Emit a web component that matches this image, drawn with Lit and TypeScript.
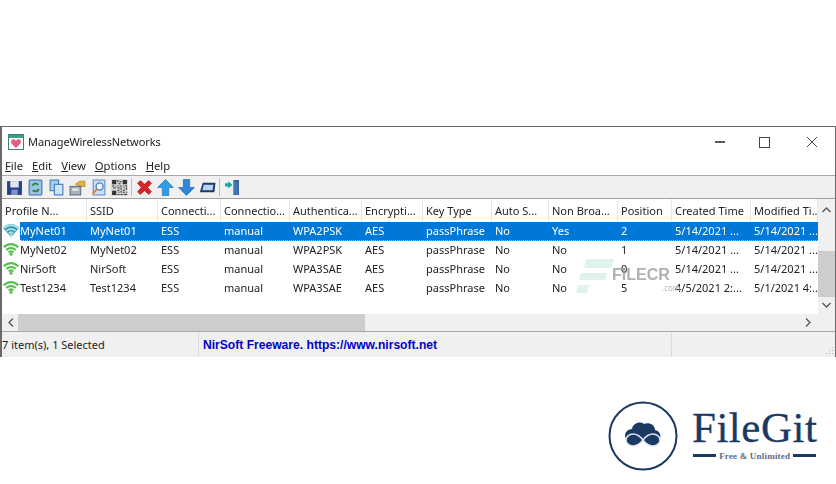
import { LitElement, css, html, svg } from "lit";
import { customElement } from "lit/decorators.js";

const columns = [
  { title: "Profile N...", w: 85 },
  { title: "SSID", w: 71 },
  { title: "Connecti...", w: 63 },
  { title: "Connectio...", w: 69 },
  { title: "Authentica...", w: 72 },
  { title: "Encrypti...", w: 61 },
  { title: "Key Type", w: 69 },
  { title: "Auto S...", w: 57 },
  { title: "Non Broa...", w: 69 },
  { title: "Position", w: 54 },
  { title: "Created Time", w: 79 },
  { title: "Modified Ti...", w: 67 },
];

const rows = [
  ["MyNet01", "MyNet01", "ESS", "manual", "WPA2PSK", "AES", "passPhrase", "No", "Yes", "2", "5/14/2021 ...", "5/14/2021 ..."],
  ["MyNet02", "MyNet02", "ESS", "manual", "WPA2PSK", "AES", "passPhrase", "No", "No", "1", "5/14/2021 ...", "5/14/2021 ..."],
  ["NirSoft", "NirSoft", "ESS", "manual", "WPA3SAE", "AES", "passPhrase", "No", "No", "0", "5/14/2021 ...", "5/14/2021 ..."],
  ["Test1234", "Test1234", "ESS", "manual", "WPA3SAE", "AES", "passPhrase", "No", "No", "5", "4/5/2021 2:...", "5/1/2021 4:..."],
];

const wifi = (selected: boolean) => {
  const color = selected ? "#a6dfe8" : "#55c04a";
  return html`<svg class="wifi" width="16" height="14" viewBox="0 0 16 14">
    ${selected ? svg`<path d="M0 5C4-.5 12-.5 16 5L8 14z" fill="#2b8fa8"/>` : ""}
    <path d="M.8 5.300C5 1 11 1 15.200 5.300" fill="none" stroke=${color} stroke-width="2.200"/>
    <path d="M3.300 8C6 5.300 10 5.300 12.700 8" fill="none" stroke=${color} stroke-width="2.200"/>
    <path d="M5.700 10.400C7 9.200 9 9.200 10.300 10.400" fill="none" stroke=${color} stroke-width="2"/>
    <circle cx="8" cy="12.300" r="1.500" fill=${color}/>
  </svg>`;
};

const icons = [
  svg`<rect x="1" y="2" width="14" height="13" fill="#27408b"/><rect x="4" y="2" width="8" height="6" fill="#dfe6f2"/><rect x="5" y="10" width="6" height="5" fill="#7f93c4"/>`,
  svg`<rect x="2" y="1" width="12" height="14" rx="1" fill="#9cc3e6" stroke="#3f6fa8"/><path d="M5 6.500a3.200 3.200 0 0 1 5.500-1M11 9.500a3.200 3.200 0 0 1-5.500 1" fill="none" stroke="#1e8a35" stroke-width="1.800"/>`,
  svg`<rect x="2" y="1" width="8" height="10" fill="#a9cdf0" stroke="#3d78b8"/><rect x="6" y="5" width="8" height="10" fill="#cfe3f7" stroke="#3d78b8"/>`,
  svg`<path d="M6 5l4-3h5v5h-4z" fill="#e2b43c" stroke="#9c7a1e" stroke-width=".6"/><rect x="1" y="7" width="10" height="8" fill="#a8b0ba" stroke="#68717c"/><rect x="3" y="9" width="6" height="2" fill="#eee"/>`,
  svg`<rect x="3" y="1" width="11" height="14" fill="#cfe1f5" stroke="#5b8cc4"/><circle cx="9" cy="7" r="3.300" fill="#f4f8fc" stroke="#4e7fb8" stroke-width="1.300"/><path d="M6.500 9.500L2.500 14" stroke="#d8883a" stroke-width="2"/>`,
  svg`<rect x="0" y="0" width="16" height="16" fill="#d8d8d8"/><path d="M1 1h4v4H1zM11 1h4v4h-4zM1 11h4v4H1zM6 1h1v2H6zM8 2h2v1H8zM7 4h2v1H7zM6 6h1v1H6zM8 6h2v1H8zM1 6h2v1H1zM4 7h1v1H4zM2 8h2v1H2zM6 8h2v1H6zM9 8h1v2H9zM11 6h1v1h-1zM13 6h2v1h-2zM12 8h1v1h-1zM14 8h1v2h-1zM6 10h2v1H6zM11 10h2v1h-2zM7 12h1v1H7zM9 11h1v2H9zM11 12h2v1h-2zM14 12h1v1h-1zM6 14h2v1H6zM9 14h2v1H9zM12 14h3v1h-3z" fill="#333"/>`,
  svg`<path d="M1.500 4L4 1.500l4 3.500 4-3.500L14.500 4 11 8l3.500 4-2.500 2.500-4-3.500-4 3.500L1.500 12 5 8z" fill="#dc2229" stroke="#a5151b" stroke-width=".6"/>`,
  svg`<path d="M8 .5L15.500 8H11v7.500H5V8H.5z" fill="#2f9ce6" stroke="#1a6cb0" stroke-width=".6"/>`,
  svg`<path d="M8 15.500L15.500 8H11V.5H5V8H.5z" fill="#2f86d8" stroke="#1a62a8" stroke-width=".6"/>`,
  svg`<path d="M3.500 3.500H15.500L14.500 12.500H.8z" fill="#1d3a66" stroke-linejoin="round"/><path d="M4.500 5.500h9l-.7 5H3.200z" fill="#b9d4ee"/>`,
  svg`<rect x="9" y="1" width="5" height="14" fill="#2a4f86"/><path d="M9 1l4 2v12l-4-1z" fill="#3d78b8"/><path d="M1 4h3V2l4 3.500L4 9V7H1z" fill="#19a6a0"/>`,
];

@customElement("app-root")
export class AppRoot extends LitElement {
  static styles = css`
    :host {
      display: block;
      position: relative;
      height: 484px;
      background: #fff;
      font-family: "Noto Sans", "Open Sans", sans-serif;
      font-size: 11px;
      color: #222;
      overflow: hidden;
    }
    .window {
      position: absolute;
      left: 0;
      top: 126px;
      width: 836px;
      height: 231px;
      box-sizing: border-box;
      border: 1px solid #6a6a6a;
      border-left-width: 2px;
      display: flex;
      flex-direction: column;
      filter: blur(0.4px);
    }
    .title {
      height: 29px;
      display: flex;
      align-items: center;
      padding-left: 6px;
      gap: 4px;
      flex: none;
    }
    .title .name { flex: 1; letter-spacing: -0.1px; }
    .caption { display: flex; }
    .caption svg { display: block; width: 46px; height: 14px; }
    .menu {
      height: 19px;
      display: flex;
      align-items: center;
      gap: 9px;
      padding-left: 3px;
      flex: none;
      font-size: 11.25px;
      border-bottom: 1px solid #a8a8a8;
    }
    .toolbar {
      height: 22px;
      background: #f0f0f0;
      display: flex;
      align-items: center;
      padding-left: 4px;
      gap: 4px;
      flex: none;
      border-bottom: 1px solid #a0a0a0;
    }
    .toolbar svg { width: 17px; height: 17px; flex: none; }
    .sep { width: 1px; height: 18px; background: #bdbdbd; margin-left: -1px; }
    .body { height: 115px; display: flex; flex: none; }
    .list { flex: 1; min-width: 0; }
    .head { display: flex; height: 23px; }
    .head span {
      box-sizing: border-box;
      padding-left: 3px;
      line-height: 23px;
      border-right: 1px solid #e6e6e6;
      white-space: nowrap;
      overflow: hidden;
    }
    .row { display: flex; height: 19px; align-items: flex-start; position: relative; }
    .row span {
      box-sizing: border-box;
      padding-left: 3px;
      white-space: nowrap;
      overflow: hidden;
      line-height: 17px;
    }
    .row span.first { padding-left: 1px; display: flex; align-items: center; }
    .row.selected { color: #fff; }
    .row.selected .band {
      position: absolute;
      left: 18px;
      right: 0;
      top: 0;
      height: 19px;
      background: #0078d7;
      border-bottom: 1px dotted #e8c070;
      box-sizing: border-box;
    }
    .row.selected span { position: relative; }
    .wifi { flex: none; margin-right: 1px; margin-top: -2px; }
    .vbar {
      width: 17px;
      background: #f0f0f0;
      position: relative;
      flex: none;
    }
    .vbar .thumb { position: absolute; left: 0; right: 0; top: 52px; height: 46px; background: #cdcdcd; }
    .arrow { position: absolute; display: block; }
    .hbar { height: 17px; background: #f0f0f0; position: relative; flex: none; }
    .hbar .thumb { position: absolute; left: 16px; width: 347px; top: 0; bottom: 0; background: #cdcdcd; }
    .status {
      flex: 1;
      display: flex;
      align-items: center;
      background: #f0f0f0;
      border-top: 1px solid #a8a8a8;
      position: relative;
    }
    .status .count {
      box-sizing: border-box;
      width: 197px;
      border-right: 1px solid #dcdcdc;
      line-height: 24px;
      padding-top: 1px;
    }
    .status .link {
      box-sizing: border-box;
      width: 473px;
      padding: 1px 0 0 4px;
      border-right: 1px solid #dcdcdc;
      line-height: 23px;
      color: #0000d0;
      font-family: "Liberation Sans", Arial, sans-serif;
      font-weight: 700;
      font-size: 12.1px;
    }
    .grip { position: absolute; right: 1px; bottom: 1px; }
    .filecr { position: absolute; left: 576px; top: 256px; width: 110px; height: 40px; }
    .filecr .word {
      position: absolute;
      left: 36px;
      top: 10px;
      font: 700 16px "Liberation Sans", sans-serif;
      color: #a8a8a8;
      opacity: 0.9;
    }
    .filecr .com { position: absolute; left: 86px; top: 26px; font-size: 8px; color: #b8b8b8; }
    .logo {
      position: absolute;
      left: 608px;
      top: 401px;
      display: flex;
      align-items: center;
      gap: 14px;
      color: #1b3a63;
    }
    .brand { display: flex; flex-direction: column; align-items: center; margin-top: -6px; }
    .brand .big {
      font: 400 43px/44px "Liberation Serif", serif;
      letter-spacing: 0.5px;
      -webkit-text-stroke: 0.3px #1b3a63;
    }
    .brand .tag {
      display: flex;
      align-items: center;
      gap: 3px;
      margin-top: 1px;
      font: 700 9px "Liberation Serif", serif;
      letter-spacing: 0.2px;
      color: #5b6c82;
    }
    .brand .tag i { display: block; width: 23px; height: 2.500px; background: #1b3a63; }
  `;

  render() {
    return html`
      <div class="window">
        <div class="title">
          <svg width="16" height="16" viewBox="0 0 16 16">
            <rect x=".5" y=".5" width="15" height="15" fill="#fff" stroke="#3f7f72"/>
            <rect x="1" y="1" width="14" height="3" fill="#3aa08c"/>
            <path d="M8 14C3 10 2.500 8 3.500 6.300S7 5 8 7c1-2 3.500-2.400 4.500-.7S13 10 8 14z" fill="#e2607a"/>
          </svg>
          <span class="name">ManageWirelessNetworks</span>
          <div class="caption">
            <svg viewBox="0 0 46 14"><path d="M18 7h10" stroke="#222" stroke-width="1.500"/></svg>
            <svg viewBox="0 0 46 14"><rect x="16.500" y="2.500" width="10" height="10" fill="none" stroke="#444"/></svg>
            <svg viewBox="0 0 46 14"><path d="M18 2l10 10M28 2L18 12" stroke="#444"/></svg>
          </div>
        </div>
        <div class="menu">
          <span><u>F</u>ile</span><span><u>E</u>dit</span><span><u>V</u>iew</span><span><u>O</u>ptions</span><span><u>H</u>elp</span>
        </div>
        <div class="toolbar">
          ${icons.map(
            (icon, i) => html`${i === 6 || i === 10 ? html`<div class="sep"></div>` : ""}<svg viewBox="0 0 16 16">${icon}</svg>`
          )}
        </div>
        <div class="body">
          <div class="list">
            <div class="head">
              ${columns.map((c) => html`<span style="width:${c.w}px">${c.title}</span>`)}
            </div>
            ${rows.map(
              (r, i) => html`<div class="row ${i === 0 ? "selected" : ""}">
                <div class="band"></div>
                ${r.map((text, j) =>
                  j === 0
                    ? html`<span class="first" style="width:${columns[j].w}px">${wifi(i === 0)}${text}</span>`
                    : html`<span style="width:${columns[j].w}px">${text}</span>`
                )}
              </div>`
            )}
          </div>
          <div class="vbar">
            <svg class="arrow" style="left:4px;top:8px" width="9" height="6" viewBox="0 0 9 6"><path d="M.5 5l4-4 4 4" fill="none" stroke="#555" stroke-width="1.300"/></svg>
            <div class="thumb"></div>
            <svg class="arrow" style="left:4px;bottom:6px" width="9" height="6" viewBox="0 0 9 6"><path d="M.5 1l4 4 4-4" fill="none" stroke="#555" stroke-width="1.300"/></svg>
          </div>
        </div>
        <div class="hbar">
          <svg class="arrow" style="left:6px;top:4px" width="6" height="9" viewBox="0 0 6 9"><path d="M5 .5l-4 4 4 4" fill="none" stroke="#555" stroke-width="1.300"/></svg>
          <div class="thumb"></div>
          <svg class="arrow" style="right:24px;top:4px" width="6" height="9" viewBox="0 0 6 9"><path d="M1 .5l4 4-4 4" fill="none" stroke="#555" stroke-width="1.300"/></svg>
        </div>
        <div class="status">
          <span class="count">7 item(s), 1 Selected</span>
          <span class="link">NirSoft Freeware. https://www.nirsoft.net</span>
          <svg class="grip" width="10" height="10" viewBox="0 0 10 10"><path d="M8 1h1v1H8zM5 4h1v1H5zM8 4h1v1H8zM2 7h1v1H2zM5 7h1v1H5zM8 7h1v1H8z" fill="#b5b5b5"/></svg>
        </div>
      </div>
      <div class="filecr">
        <svg width="40" height="38" viewBox="0 0 40 38">
          <path d="M10 3h28l-3 9H8zM5 17h26l-2 7H3zM2 29h11l-2 8H0z" fill="#dff3ec"/>
        </svg>
        <span class="word">FILECR</span>
        <span class="com">.com</span>
      </div>
      <div class="logo">
        <svg width="70" height="70" viewBox="0 0 70 70">
          <circle cx="35" cy="35" r="33.500" fill="none" stroke="#1b3a63" stroke-width="2"/>
          <path d="M18 38c-3-6 2-10 6-10 1-6 8-8 12-5 5-2 11 1 11 6 5 1 7 6 4 10l-33 2z" fill="#1b3a63"/>
          <path d="M35 39c-3-4-6-6-10-6s-7 3-7 6 3 6 7 6 7-2 10-6 6-6 10-6 7 3 7 6-3 6-7 6-7-2-10-6z" fill="#1b3a63" stroke="#dfe5ec" stroke-width="1.500"/>
        </svg>
        <div class="brand">
          <span class="big">FileGit</span>
          <span class="tag"><i></i>Free &amp; Unlimited<i></i></span>
        </div>
      </div>
    `;
  }
}
